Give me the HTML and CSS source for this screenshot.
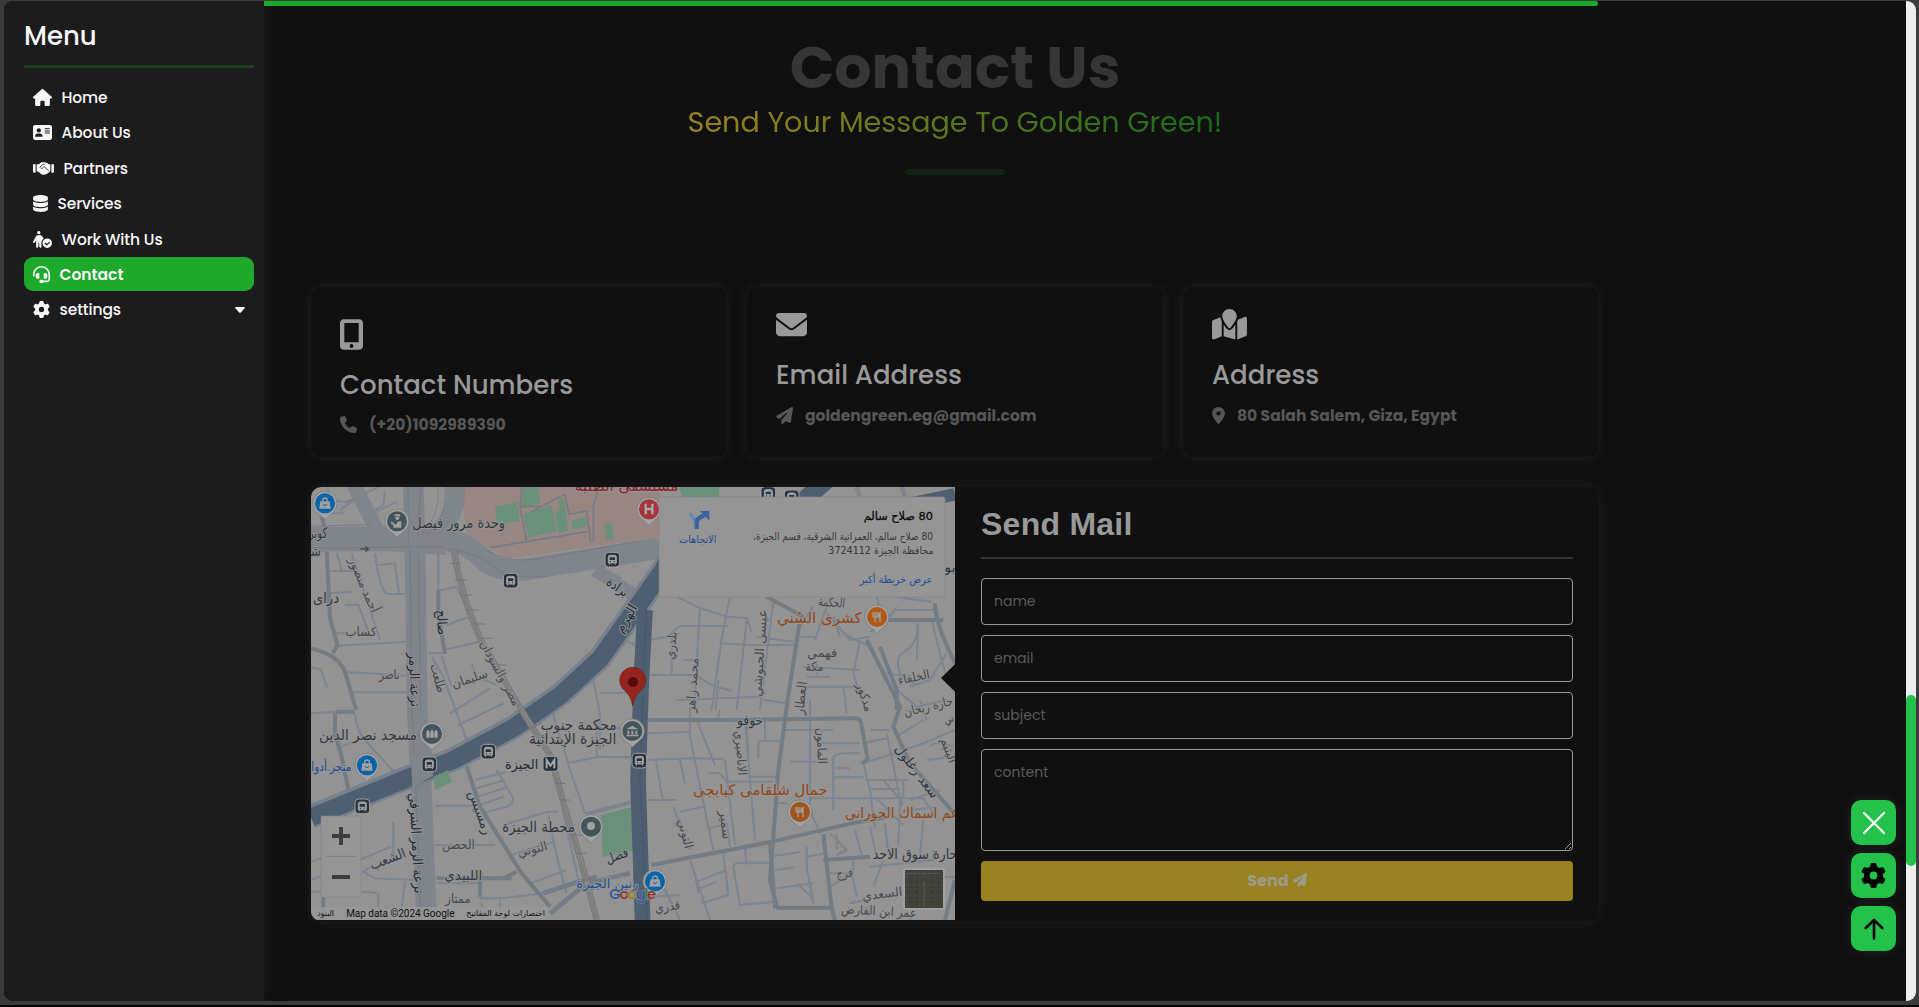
FILE: index.html
```html
<!DOCTYPE html>
<html lang="en">
<head>
<meta charset="utf-8">
<title>Golden Green - Contact</title>
<link rel="stylesheet" href="styles.css">
</head>
<body>
<svg class="defs" width="0" height="0" aria-hidden="true">
  <symbol id="i-home" viewBox="0 0 576 512"><path d="M575.8 255.5c0 18-15 32.1-32 32.1h-32l.7 160.2c0 2.7-.2 5.4-.5 8.1V472c0 22.1-17.9 40-40 40H392c-22.1 0-40-17.9-40-40V384c0-17.700-14.300-32-32-32H256c-17.700 0-32 14.300-32 32v88c0 22.100-17.900 40-40 40H104c-22.100 0-40-17.900-40-40V287.600H32c-18 0-32-14-32-32.100c0-9 3-17 10-24L266.400 8c7-7 15-8 22-8s15 2 21 7L564.800 231.500c8 7 12 15 11 24z"/></symbol>
  <symbol id="i-card" viewBox="0 0 576 512"><path fill-rule="evenodd" d="M64 32C28.700 32 0 60.700 0 96V416c0 35.300 28.700 64 64 64H512c35.300 0 64-28.700 64-64V96c0-35.300-28.700-64-64-64H64zM176 128a64 64 0 1 1 0 128 64 64 0 1 1 0-128zM144 288h64c44 0 80 36 80 80 0 9-7 16-16 16H80c-9 0-16-7-16-16 0-44 36-80 80-80zM368 128H496c20 0 20 32 0 32H368c-20 0-20-32 0-32zM368 192H496c20 0 20 32 0 32H368c-20 0-20-32 0-32zM368 256H496c20 0 20 32 0 32H368c-20 0-20-32 0-32z"/></symbol>
  <symbol id="i-hands" viewBox="0 0 640 512"><path d="M0 128h80v256H48c-26 0-48-20-48-48zM560 128h80v208c0 28-22 48-48 48h-32z"/><path d="M112 128h60l60-48c25-20 45-16 65-16h50c30 0 60 5 85 25l50 39h46v210h-24c8 20-10 50-38 46-8 28-32 40-56 32-20 28-50 38-76 22-40 20-70 4-90-14l-92-80h-40z"/><path d="M200 225l90-85c18-14 35-14 58-14M230 235c28 28 60 15 80-8l30-30 140 132" fill="none" stroke="#1c1c1c" stroke-width="24"/></symbol>
  <symbol id="i-data" viewBox="0 0 448 512"><path d="M448 80v48c0 44.200-100.300 80-224 80S0 172.200 0 128V80C0 35.800 100.300 0 224 0S448 35.800 448 80zM393.200 214.700c20.800-7.400 39.900-16.900 54.800-28.600V288c0 44.200-100.300 80-224 80S0 332.200 0 288V186.100c14.900 11.800 34 21.200 54.800 28.600C99.700 230.700 159.500 240 224 240s124.300-9.300 169.200-25.300zM0 346.100c14.900 11.800 34 21.200 54.800 28.600C99.700 390.700 159.500 400 224 400s124.300-9.300 169.200-25.300c20.800-7.400 39.900-16.900 54.800-28.600V432c0 44.200-100.300 80-224 80S0 476.200 0 432V346.100z"/></symbol>
  <symbol id="i-person" viewBox="0 0 576 512"><circle cx="176" cy="50" r="50"/><path d="M140 128h72c35 0 62 16 78 44l34 58c-45 28-68 74-68 124v116c0 56-40 56-68 0v-118h-24v118c-28 56-68 56-68 0V280l-38 64c-28 38-76 8-54-30l66-120c18-42 42-66 70-66z"/><path fill-rule="evenodd" d="M432 224a144 144 0 1 1 0 288 144 144 0 1 1 0-288zm67 100L416 386l-50-40-22 22 72 70 104-90z"/></symbol>
  <symbol id="i-headset" viewBox="0 0 512 512"><path d="M256 48C141.100 48 48 141.100 48 256v40c0 13.300-10.700 24-24 24s-24-10.700-24-24V256C0 114.600 114.600 0 256 0S512 114.600 512 256V400.100c0 48.600-39.400 88-88.100 88L313.600 488c-8.300 14.300-23.800 24-41.600 24H240c-26.500 0-48-21.500-48-48s21.500-48 48-48h32c17.800 0 33.300 9.700 41.600 24l110.400 .1c22.100 0 40-17.900 40-40V256c0-114.900-93.100-208-208-208zM144 208h16c17.700 0 32 14.300 32 32V352c0 17.700-14.300 32-32 32H144c-35.300 0-64-28.700-64-64V272c0-35.300 28.700-64 64-64zm224 0c35.300 0 64 28.700 64 64v48c0 35.300-28.700 64-64 64H352c-17.700 0-32-14.300-32-32V240c0-17.700 14.300-32 32-32h16z"/></symbol>
  <symbol id="i-gear" viewBox="0 0 512 512"><path d="M495.900 166.600c3.200 8.700 .5 18.400-6.400 24.600l-43.300 39.400c1.100 8.300 1.700 16.800 1.700 25.400s-.6 17.100-1.700 25.400l43.300 39.400c6.900 6.200 9.600 15.900 6.400 24.600c-4.400 11.900-9.700 23.300-15.800 34.300l-4.700 8.100c-6.600 11-14 21.400-22.100 31.200c-5.900 7.200-15.700 9.600-24.500 6.800l-55.700-17.700c-13.400 10.300-28.200 18.900-44 25.400l-12.500 57.100c-2 9.100-9 16.300-18.200 17.800c-13.800 2.300-28 3.500-42.500 3.500s-28.700-1.200-42.500-3.500c-9.200-1.500-16.200-8.700-18.200-17.800l-12.500-57.100c-15.800-6.500-30.600-15.100-44-25.400L83.100 425.900c-8.800 2.800-18.600 .3-24.500-6.800c-8.100-9.800-15.500-20.200-22.100-31.200l-4.700-8.100c-6.100-11-11.400-22.400-15.800-34.300c-3.200-8.700-.5-18.400 6.400-24.600l43.300-39.400C64.600 273.100 64 264.600 64 256s.6-17.100 1.700-25.400L22.400 191.200c-6.900-6.200-9.600-15.900-6.400-24.600c4.400-11.900 9.700-23.300 15.800-34.300l4.700-8.100c6.600-11 14-21.400 22.100-31.200c5.900-7.200 15.700-9.600 24.500-6.800l55.700 17.700c13.400-10.300 28.200-18.900 44-25.400l12.500-57.100c2-9.100 9-16.300 18.200-17.800C227.300 1.200 241.500 0 256 0s28.700 1.200 42.500 3.500c9.200 1.500 16.200 8.700 18.200 17.800l12.500 57.100c15.800 6.500 30.600 15.100 44 25.400l55.700-17.700c8.800-2.800 18.600-.3 24.500 6.800c8.100 9.800 15.500 20.200 22.100 31.200l4.700 8.100c6.100 11 11.400 22.400 15.800 34.300zM256 336a80 80 0 1 0 0-160 80 80 0 1 0 0 160z"/></symbol>
  <symbol id="i-mobile" viewBox="0 0 384 512"><path fill-rule="evenodd" d="M64 0H320c35.300 0 64 28.700 64 64V448c0 35.300-28.700 64-64 64H64c-35.300 0-64-28.700-64-64V64C0 28.700 28.700 0 64 0zM72 64V384H312V64zM192 416a32 32 0 1 0 0 64 32 32 0 1 0 0-64z"/></symbol>
  <symbol id="i-mail" viewBox="0 0 512 512"><path d="M48 64C21.500 64 0 85.500 0 112c0 15.100 7.100 29.300 19.200 38.400L236.800 313.600c11.400 8.500 27 8.500 38.400 0L492.800 150.400c12.100-9.100 19.200-23.300 19.200-38.400c0-26.500-21.500-48-48-48H48zM0 176V384c0 35.300 28.700 64 64 64H448c35.300 0 64-28.700 64-64V176L294.400 339.200c-22.800 17.100-54 17.100-76.800 0L0 176z"/></symbol>
  <symbol id="i-map" viewBox="0 0 576 512"><path d="M408 120c0 54.600-73.100 151.900-105.200 192c-7.700 9.600-22 9.600-29.600 0C241.100 271.900 168 174.600 168 120C168 53.700 221.700 0 288 0s120 53.700 120 120zM416 200.400c3.500-6.900 6.700-13.800 9.600-20.600c.5-1.200 1-2.500 1.500-3.700l116-46.400C558.900 123.400 576 135 576 152V422.800c0 9.800-6 18.600-15.100 22.300L416 503V200.400zM137.600 138.300c2.400 14.100 7.200 28.300 12.800 41.500c2.900 6.800 6.100 13.700 9.600 20.600V451.800L32.900 502.700C17.100 509 0 497.400 0 480.400V209.600c0-9.800 6-18.600 15.100-22.300l122.600-49zM327.800 332c13.900-17.400 35.700-45.700 56.200-77V504.300L192 449.400V255c20.500 31.300 42.300 59.600 56.200 77c20.500 25.600 59.100 25.600 79.600 0z"/></symbol>
  <symbol id="i-phone" viewBox="0 0 512 512"><path d="M164.900 24.600c-7.700-18.600-28-28.500-47.400-23.200l-88 24C12.100 30.200 0 46 0 64C0 311.400 200.600 512 448 512c18 0 33.800-12.100 38.600-29.500l24-88c5.300-19.400-4.600-39.700-23.200-47.400l-96-40c-16.300-6.800-35.200-2.100-46.300 11.600L304.700 368C234.300 334.700 177.300 277.700 144 207.300L193.300 167c13.700-11.200 18.400-30 11.600-46.300l-40-96z"/></symbol>
  <symbol id="i-plane" viewBox="0 0 512 512"><path d="M498.100 5.600c10.100 7 15.400 19.100 13.500 31.200l-64 416c-1.500 9.700-7.400 18.200-16 23s-18.900 5.400-28 1.600L284 427.700l-68.500 74.100c-8.900 9.700-22.900 12.900-35.200 8.100S160 493.200 160 480V396.400c0-4 1.500-7.800 4.200-10.700L331.800 202.800c5.800-6.300 5.600-16-.4-22s-15.700-6.400-22-.7L106 360.800 17.700 316.600C7.100 311.300 .3 300.700 0 288.900s5.900-22.800 16.100-28.700l448-256c10.700-6.100 23.900-5.500 34 1.400z"/></symbol>
  <symbol id="i-pin" viewBox="0 0 384 512"><path d="M215.700 499.200C267 435 384 279.400 384 192C384 86 298 0 192 0S0 86 0 192c0 87.400 117 243 168.300 307.200c12.300 15.300 35.100 15.300 47.400 0zM192 128a64 64 0 1 1 0 128 64 64 0 1 1 0-128z"/></symbol>
</svg>

<div class="window">
  <aside class="sidebar">
    <h2 class="menu-title">Menu</h2>
    <nav class="menu">
      <a class="item"><svg width="19" height="17"><use href="#i-home"/></svg><span>Home</span></a>
      <a class="item"><svg width="19" height="17"><use href="#i-card"/></svg><span>About Us</span></a>
      <a class="item"><svg width="21" height="17"><use href="#i-hands"/></svg><span>Partners</span></a>
      <a class="item"><svg width="15" height="17"><use href="#i-data"/></svg><span>Services</span></a>
      <a class="item"><svg width="19" height="17"><use href="#i-person"/></svg><span>Work With Us</span></a>
      <a class="item active"><svg width="17" height="17"><use href="#i-headset"/></svg><span>Contact</span></a>
      <a class="item"><svg width="17" height="17"><use href="#i-gear"/></svg><span>settings</span><svg class="caret" width="10" height="6" viewBox="0 0 10 6"><path d="M1 0h8q1.500 0 .6 1.200L5.800 5.500q-.8.800-1.600 0L.4 1.200Q-.5 0 1 0z"/></svg></a>
    </nav>
  </aside>

  <main class="content">
    <div class="progress"></div>
    <header class="heading">
      <h1>Contact Us</h1>
      <p>Send Your Message To Golden Green!</p>
      <div class="rule"></div>
    </header>

    <section class="cards">
      <article class="card tall">
        <svg width="23" height="31"><use href="#i-mobile"/></svg>
        <h3>Contact Numbers</h3>
        <p><svg width="17" height="17"><use href="#i-phone"/></svg><span>(+20)1092989390</span></p>
      </article>
      <article class="card">
        <svg width="31" height="31"><use href="#i-mail"/></svg>
        <h3>Email Address</h3>
        <p><svg width="17" height="17"><use href="#i-plane"/></svg><span>goldengreen.eg@gmail.com</span></p>
      </article>
      <article class="card">
        <svg width="35" height="31"><use href="#i-map"/></svg>
        <h3>Address</h3>
        <p><svg width="13" height="17"><use href="#i-pin"/></svg><span>80 Salah Salem, Giza, Egypt</span></p>
      </article>
    </section>

    <section class="panel">
      <svg class="map" width="644" height="433" viewBox="33 21 1932 1299">
        <defs>
          <g id="p"><path d="M0 48L-20 30A36 36 0 1 1 20 30z" fill="#a3a3a3" stroke="#777" stroke-width="2"/><circle r="30"/></g>
          <g id="bus"><rect x="-22" y="-22" width="44" height="44" rx="11" fill="#27333f" stroke="#a0a0a0" stroke-width="3"/><path d="M-12 10v-18q0-5 5-5h14q5 0 5 5v18zM-9 10v5M9 10v5" fill="#a0a0a0" stroke="#a0a0a0" stroke-width="3"/><path d="M-8-7H8V1H-8z" fill="#27333f"/><path d="M-7 6h3M4 6h3" stroke="#27333f" stroke-width="4"/></g>
          <g id="bag" fill="#a0a0a0"><path d="M-14-6h28l3 22h-34z"/><path d="M-7-5v-4q0-7 7-7t7 7v4" fill="none" stroke="#a0a0a0" stroke-width="4"/><path d="M-6 3q6 8 12 0" stroke="#0563a8" stroke-width="3" fill="none"/></g>
          <g id="food" stroke="#a0a0a0" stroke-width="4" fill="none"><path d="M-12-15v10q0 6 6 6t6-6v-10M-6-15v31"/><path d="M9 16V-13q-6 4-5 14h5z" fill="#a0a0a0"/></g>
        </defs>
        <rect x="33" y="21" width="1932" height="1299" fill="#939393"/>
        <path d="M480 21H1080V172L620 236 500 160z" fill="#988683"/>
        <g fill="#6b907a"><path d="M585 80l65-15 10 58-68 12zM665 21h50l5 50-53 14zM670 102l85-26 15 78-84 19zM763 96l15-3-2-35 17-3 12 95-28 10zM815 122l43-12 3 28-42 10zM912 140q0-8 10-9 10-2 13 6l7 30q0 12-12 12-10 0-12-8zM1138 21h118l5 60h-110zM903 1005l92-24 5 130-92 20z"/></g>
        <g fill="none" stroke="#767b86" stroke-width="5">
          <path d="M665 21l-5 60 20 100M692 96l103-53 12 60 53-10 12 95M880 185V80l15-55M570 203l290-48M660 80l60 0"/>
        </g>

        <g fill="none" stroke="#7c848f" stroke-width="6" stroke-linejoin="round">
          <path d="M85 21v40l55 5 95-45M120 90l70-50M190 110l60-35 5-40M230 95l60-30M60 100l70 0"/>
          <path d="M110 220l15 50M88 273h70M155 220l85 260M225 220q15 110 35 122h60M235 255l50-5 12 90M88 340l67-4M135 375h40l30 80M110 460h25M115 497l205-12M145 577l60 3 115 7M33 560l30 10 18 52M155 637h165"/>
          <path d="M415 212v120l55-12 40 90M440 435l70-25M430 510l110-25M385 520h50M395 530l35 60 70 190M425 530l30 90M515 550l15 40 60 25M450 700l120-75M475 735l135-65M500 780l-60-160"/>
          <path d="M33 700l75-5 58 0M120 800l70-25M165 700q5 55 30 80l95 105M33 870h70M33 1145l40-15M33 1235h150M280 1025v100M315 1205l-10 80M160 1235q70 0 75 8v50M215 1160l-25 15 35 20 120 5M33 1200l240-100"/>
          <path d="M525 900l95-25M530 925l85-25M535 950l85-28M540 975l70-25M590 870l50 85q0 18-20 25l-70 18M405 977h115M405 1095h180M410 1210h130M610 1035l125-38q35-5 40 0M745 1005l22 110 32 125M790 1000l45 200M690 1210l110-40M635 1125l130-40M540 1255h60l130-15M545 1270v50M600 1250v70M755 690l50 160 90-20 110 2M890 745v85M900 745h100M805 855l50 145 145-38M860 1005l135-35M880 600l20 100v110M900 638h100M975 480l30 15M905 265l60 30M1003 360l20-50"/>
        </g>
        <g fill="none" stroke="#7c848f" stroke-width="6" stroke-linejoin="round" transform="translate(990 0)">
          <path d="M140 350l60 30 90 30 60 5 15 40M300 350l-25 125-30 215M210 380l-15 260v50M55 480l60-10q25-30 40-32h140M125 460v125M55 585h140l50 30 60 18M140 660l250-10M160 540l40 0M270 490l90 5h140M350 420l-30 270M265 600l-8 90M380 470l110 15M430 360l-40 330M400 660l70 10M500 470l60 0M510 440l40-60M590 380l-35 100M520 560l170 10M690 480l-20 100 35 110M530 590h70M560 550v35M590 400l70 80 60-10M610 410l20 60M790 350l115 15M790 390h130M860 430q10 60-45 90-20 20-5 60 30 40 70 30M865 430l-5 110M905 420l40 160M800 380q-30 50-80 75M840 620l60-20 50-80M500 620l180 0M650 700l-10-80M770 580l60 10M790 620l70 60 90-20M640 460l80 40M740 350l20 70"/>
        </g>
        <g fill="none" stroke="#7c848f" stroke-width="6" stroke-linejoin="round" transform="translate(990 660)">
          <path d="M55 100l125-5M55 180l125-5 100 2M78 180l20 120M55 300h85M150 180l15 70M180 20v90l30 150 40 190M200 60l55 135M235 220h35l20 25h140M285 180l30 255M270 30l-10 35M350 80l5 100M405 60v60M385 130q0-8 15-8h60M385 130v45M355 230h85M345 60l30 360M150 335l70-15M240 385l50-15M130 320l50 130M290 370l10 70M430 310h40M460 90h150M540 0v330l30 70M480 185h80M575 130h115M610 180v150M610 180q0-20 30-20h50M620 205h40M610 232h90M540 295h340M700 190l90-30M695 130l75-15M720 90l60 0M705 240h130M720 267h90M700 190l20 80 15 115M770 100l45 220M800 110l80-50M820 150l60-20 95-40M870 0l20 60M900 140q10-20 70 0M890 180l85-10M740 295l80 80M760 240l60 70M810 295l-5 140M820 240l0 50M840 300l90-30M850 330l70-10M880 295l40 60M880 360l-10 110M600 400l50 50-30 15M620 400v50M675 390l20 75M720 380l20 90M765 370l10 90M430 468l80-12M435 510l60-8M440 565l110-15M500 550l45 40M530 440v60l20 110M530 470l55-10M310 500q0-10 20-12h90M310 500l20 115 110-10M345 445l5 50M200 545l90-35M280 460l15 125-80 25M180 480l60 180M210 565l50-20M100 560l50 100M60 590l90-5M195 520l10 60M590 520l60 0M600 560l70-40 0-45M615 550l50-30 15 70M720 500l190-20v-30M760 480l-30 80M660 610l150-30M870 560l-30 100M910 530l65 0"/>
        </g>
        <g fill="none" stroke="#737c83" stroke-width="12" stroke-linejoin="round">
          <path d="M80 215l10 200 22 80-14 25M33 505q90 20 105 80l30 105M65 110l10 35M105 700v60l20 70 20 100M108 695h55M415 330v70l20 122M500 860l40 120 75 120 50 80 85 100M410 1195h225M540 1200v50M540 1195h70l40-20M70 1250v70"/>
          <path d="M1045 720l230 0 390-5q15 0 18 12l20 110-18 15M1500 420l-40 260-25 190-25 330 20 80M1055 1155l360-70 240-55 110-20M1410 1085l15 200M1430 1283h165l-25-220M1595 1283l10 40M1570 1140l140-10M1400 350l110 60M1700 480l100 200-20 60 50 110 150 170M1750 420l180 0M1905 370q0 60 60 180M1740 500l50 130 0 60M1965 1200l-30 120"/>
        </g>
        <path d="M33 178L250 176 440 188" fill="none" stroke="#80848b" stroke-width="74"/>
        <path d="M160 10L235 160" stroke="#80848b" stroke-width="44"/>
        <path d="M468 10q5 110-75 165" fill="none" stroke="#80848b" stroke-width="56"/>
        <path d="M440 183q60 0 110 55 50 42 130 30L1080 204" fill="none" stroke="#80848b" stroke-width="64"/>
        <path d="M885 270l140 90" stroke="#80848b" stroke-width="40"/>
        <path d="M340 10l5 200 7 480 12 230 16 410" fill="none" stroke="#80848b" stroke-width="62"/>
        <path d="M325 21v180M362 21l-8 150M330 210l5 460 12 240 15 400M355 220l7 480M33 205l400-5M440 205q120 20 160 72 60 20 140 12M560 210q60 38 150 28l310-55M33 138l180-4M415 21q5 90-50 140M435 21q8 100-60 145" fill="none" stroke="#6f747f" stroke-width="2"/>
        <path d="M33 1010L335 888 460 838 640 742 780 645 900 535 1000 395 1090 270 1150 130" fill="none" stroke="#77818c" stroke-width="72" stroke-linejoin="round"/>
        <path d="M33 1012L335 890 460 840 640 744 780 647 900 537 1000 397 1090 270 1150 130M1490 80l90-80" fill="none" stroke="#4f5f72" stroke-width="54" stroke-linejoin="round"/>
        <path d="M1035 390L1024 600 1014 900 1028 1330" fill="none" stroke="#4f5f72" stroke-width="47"/>
        <path d="M1040 380L1030 600 1020 900 1040 1320" fill="none" stroke="#435366" stroke-width="2"/>
        <path d="M333 830l62-26 4 84-62 34z" fill="#80848b"/>
        <path d="M400 890l45-20 10 36-50 24z" fill="#6b907a"/>
        <path d="M1800 78l165-35" stroke="#4f5f72" stroke-width="38"/>
        <g stroke="#80848b" stroke-width="14" fill="none"><path d="M1670 21l10 30M1805 21l10 30"/></g>
        <path d="M730 1240l90-30 70-20M750 1300l110-90 130-30" stroke="#747c86" stroke-width="14" fill="none"/>
        <g fill="none">
          <path d="M462 210q15 120 80 270l110 190 100 160 45 165 45 145 48 180" stroke="#858585" stroke-width="18"/>
          <path d="M455 212q15 120 80 270l110 190 100 160 45 165 45 145 48 180M462 210q15 120 80 270l110 190 100 160 45 165 45 145 48 180M470 208q15 120 80 270l110 190 100 160 45 165 45 145 48 180" stroke="#707070" stroke-width="2"/>
          <path d="M452 250h30M465 300h36M480 345h36M500 390h36M520 432h36M540 475h36M575 555h44M690 745l36-16M740 830h30M765 910h30M780 960h30M815 1065h30M825 1120h35M850 1200h34" stroke="#747474" stroke-width="3"/>
        </g>

        <g class="lbl">
          <text x="476" y="143" textLength="278" lengthAdjust="spacingAndGlyphs">وحدة مرور فيصل</text>
          <text x="42" y="173" textLength="80" lengthAdjust="spacingAndGlyphs">كوبرى</text>
          <text x="43" y="227" textLength="40" lengthAdjust="spacingAndGlyphs">شـ</text>
          <text x="78" y="370" textLength="78" lengthAdjust="spacingAndGlyphs">دراى</text>
          <text class="sm" x="183" y="469" textLength="94" lengthAdjust="spacingAndGlyphs">كساب</text>
          <text class="sm" x="268" y="596" textLength="62" lengthAdjust="spacingAndGlyphs">ناصر</text>
          <text class="sm" transform="translate(180 320) rotate(67)" textLength="175" lengthAdjust="spacingAndGlyphs">أحمد منصور</text>
          <text class="dk" transform="translate(412 428) rotate(88)" textLength="76" lengthAdjust="spacingAndGlyphs">صالح</text>
          <text class="dk" transform="translate(330 600) rotate(88)" textLength="162" lengthAdjust="spacingAndGlyphs">ترعة الزمر</text>
          <text class="sm" transform="translate(402 598) rotate(75)" textLength="88" lengthAdjust="spacingAndGlyphs">طلعت</text>
          <text class="sm" transform="translate(513 608) rotate(-18)" textLength="112" lengthAdjust="spacingAndGlyphs">سليمان</text>
          <text class="sm" transform="translate(590 585) rotate(62)" textLength="215" lengthAdjust="spacingAndGlyphs">مصر والسودان</text>
          <text class="dk" transform="translate(945 332) rotate(35)" textLength="70" lengthAdjust="spacingAndGlyphs">برادة</text>
          <text class="dk" transform="translate(990 422) rotate(-60)" textLength="92" lengthAdjust="spacingAndGlyphs">الهرم</text>
          <text x="204" y="780" textLength="294" lengthAdjust="spacingAndGlyphs">مسجد نصر الدين</text>
          <text class="blue" x="94" y="874" textLength="120" lengthAdjust="spacingAndGlyphs">متجر أدوا</text>
          <text x="836" y="750" textLength="228" lengthAdjust="spacingAndGlyphs">محكمة جنوب</text>
          <text x="818" y="792" textLength="262" lengthAdjust="spacingAndGlyphs">الجيزة الإبتدائية</text>
          <text class="dk" x="665" y="866" textLength="100" lengthAdjust="spacingAndGlyphs">الجيزة</text>
          <text x="716" y="1055" textLength="218" lengthAdjust="spacingAndGlyphs">محطة الجيزة</text>
          <text class="sm" x="475" y="1108" textLength="98" lengthAdjust="spacingAndGlyphs">الحصن</text>
          <text class="dk2" x="490" y="1200" textLength="114" lengthAdjust="spacingAndGlyphs">اللبيدي</text>
          <text class="sm" x="474" y="1270" textLength="76" lengthAdjust="spacingAndGlyphs">ممتاز</text>
          <text class="sm" transform="translate(700 1120) rotate(-14)" textLength="90" lengthAdjust="spacingAndGlyphs">التوني</text>
          <text class="dk2" transform="translate(268 1150) rotate(-21)" textLength="112" lengthAdjust="spacingAndGlyphs">الشعب</text>
          <text class="dk2" transform="translate(528 1002) rotate(70)" textLength="138" lengthAdjust="spacingAndGlyphs">رمسيس</text>
          <text class="dk" transform="translate(336 1090) rotate(87)" textLength="302" lengthAdjust="spacingAndGlyphs">ترعة الزمر الشرقي</text>
          <text class="dk2" transform="translate(955 1140) rotate(-20)" textLength="70" lengthAdjust="spacingAndGlyphs">فضل</text>
          <text class="blue" x="922" y="1225" textLength="186" lengthAdjust="spacingAndGlyphs">رنين الجيزة</text>
          <text class="dk2" x="1350" y="734" textLength="78" lengthAdjust="spacingAndGlyphs">خوفو</text>
          <text class="org" x="1558" y="430" textLength="254" lengthAdjust="spacingAndGlyphs">كشرى السُني</text>
          <text class="sm" transform="translate(1594 380) rotate(5)" textLength="80" lengthAdjust="spacingAndGlyphs">الحكمة</text>
          <text class="sm" x="1566" y="531" textLength="90" lengthAdjust="spacingAndGlyphs">فهمي</text>
          <text class="sm" x="1543" y="572" textLength="54" lengthAdjust="spacingAndGlyphs">مكة</text>
          <text class="sm" transform="translate(1126 498) rotate(-84)" textLength="85" lengthAdjust="spacingAndGlyphs">بلدري</text>
          <text class="sm" transform="translate(1190 616) rotate(-86)" textLength="165" lengthAdjust="spacingAndGlyphs">محمد زاهر</text>
          <text class="sm" transform="translate(1392 520) rotate(-86)" textLength="262" lengthAdjust="spacingAndGlyphs">عيسى الجيوشي</text>
          <text class="sm" transform="translate(1515 655) rotate(-84)" textLength="100" lengthAdjust="spacingAndGlyphs">العطار</text>
          <text class="sm" transform="translate(1683 655) rotate(72)" textLength="88" lengthAdjust="spacingAndGlyphs">مدكور</text>
          <text class="sm" transform="translate(1844 604) rotate(-12)" textLength="96" lengthAdjust="spacingAndGlyphs">الخلفاء</text>
          <text class="sm" transform="translate(1888 692) rotate(-14)" textLength="150" lengthAdjust="spacingAndGlyphs">حارة ريحان</text>
          <text class="sm" transform="translate(1950 728) rotate(-20)" textLength="30" lengthAdjust="spacingAndGlyphs">ني</text>
          <text class="sm" transform="translate(1935 815) rotate(70)" textLength="78" lengthAdjust="spacingAndGlyphs">اليتيم</text>
          <text class="dk2" transform="translate(1840 882) rotate(53)" textLength="190" lengthAdjust="spacingAndGlyphs">سعد زغلول</text>
          <text class="sm" transform="translate(1310 820) rotate(86)" textLength="135" lengthAdjust="spacingAndGlyphs">الاناصيري</text>
          <text class="sm" transform="translate(1552 798) rotate(88)" textLength="108" lengthAdjust="spacingAndGlyphs">المامون</text>
          <text class="org" x="1381" y="945" textLength="404" lengthAdjust="spacingAndGlyphs">جمال شلقامى كبابجى</text>
          <text class="org" x="1806" y="1014" textLength="342" lengthAdjust="spacingAndGlyphs">عم اسماك الحورانى</text>
          <text class="sm" transform="translate(1264 1036) rotate(84)" textLength="86" lengthAdjust="spacingAndGlyphs">سمير</text>
          <text class="sm" transform="translate(1144 1064) rotate(76)" textLength="90" lengthAdjust="spacingAndGlyphs">التوني</text>
          <text x="1845" y="1136" textLength="254" lengthAdjust="spacingAndGlyphs">حارة سوق الاحد</text>
          <text class="sm" transform="translate(1635 1192) rotate(-5)" textLength="50" lengthAdjust="spacingAndGlyphs">فرج</text>
          <text class="sm" transform="translate(1748 1254) rotate(-7)" textLength="120" lengthAdjust="spacingAndGlyphs">السعدي</text>
          <text class="sm" transform="translate(1736 1306) rotate(3)" textLength="226" lengthAdjust="spacingAndGlyphs">عمر ابن الفارض</text>
          <text class="sm" transform="translate(1104 1292) rotate(-8)" textLength="76" lengthAdjust="spacingAndGlyphs">قدري</text>
          <text class="red" x="980" y="34" textLength="310" lengthAdjust="spacingAndGlyphs">مستشفى الطلبة</text>
          <text class="dk2" x="1950" y="275" textLength="34" lengthAdjust="spacingAndGlyphs">بو</text>
        </g>

        <use href="#p" x="75" y="70" fill="#0563a8"/><use href="#bag" x="75" y="70"/>
        <use href="#p" x="201" y="856" fill="#0563a8"/><use href="#bag" x="201" y="856"/>
        <use href="#p" x="1065" y="1204" fill="#0563a8"/><use href="#bag" x="1065" y="1204"/>
        <use href="#p" x="291" y="124" fill="#44545b"/><path d="M284 103h16v6h-16zM286 111h12q0 9-6 9t-6-9zM275 124l12 11 8-11h9v19h-24v-8l-8-6z" fill="#a0a0a0"/>
        <use href="#p" x="396" y="762" fill="#44545b"/><path d="M379 773v-18l5-6 5 6v18zM391 773v-18q5-12 10 0v18zM403 773v-18l5-6 5 6v18z" fill="#a0a0a0"/>
        <use href="#p" x="997" y="753" fill="#44545b"/><path d="M979 748l18-11 18 11zM982 752h6v11h-6zM1006 752h6v11h-6zM979 764h36v5h-36zM994 752h6v11h-6z" fill="#a0a0a0"/>
        <use href="#p" x="873" y="1040" fill="#44545b"/><circle cx="873" cy="1038" r="12" fill="#a0a0a0"/>
        <use href="#p" x="1047" y="88" fill="#a7343c"/><path d="M1037 71v32M1057 71v32M1037 87h20" stroke="#aaa" stroke-width="7"/>
        <use href="#p" x="1731" y="411" fill="#b05a18"/><use href="#food" x="1731" y="411"/>
        <use href="#p" x="1500" y="996" fill="#a3521a"/><use href="#food" x="1500" y="996"/>
        <use href="#bus" x="632" y="302"/><use href="#bus" x="937" y="239"/><use href="#bus" x="388" y="853"/><use href="#bus" x="565" y="815"/><use href="#bus" x="187" y="979"/><use href="#bus" x="1018" y="842"/><use href="#bus" x="1405" y="42"/><use href="#bus" x="1475" y="52"/>
        <rect x="729" y="829" width="45" height="45" rx="9" fill="#27333f" stroke="#a0a0a0" stroke-width="3"/><path d="M740 865v-25l11.500 17 11.500-17v25" fill="none" stroke="#a8a8a8" stroke-width="6"/>
        <path d="M181 207h25M196 199l9 8-9 8" fill="none" stroke="#4b5056" stroke-width="4"/>
        <path d="M998 678q-4-28-22-45a39 39 0 1 1 46-1q-20 18-24 46z" fill="#94261f" stroke="#701b16" stroke-width="2"/><circle cx="999" cy="606" r="15" fill="#570a0a"/>

        <rect x="1077" y="51" width="858" height="300" rx="6" fill="#959595" stroke="#858585" stroke-width="2"/>
        <path d="M1192 132L1170 99" stroke="#6f87a8" stroke-width="11"/><path d="M1190 147v-20q0-8 7-12l18-12" fill="none" stroke="#3d64a0" stroke-width="13"/><path d="M1200 93h28v29z" fill="#3d64a0"/>
        <g class="info">
          <text class="ttl" x="1795" y="119" textLength="207" lengthAdjust="spacingAndGlyphs">80 صلاح سالم</text>
          <text x="1629" y="181" textLength="540" lengthAdjust="spacingAndGlyphs">80 صلاح سالم، العمرانية الشرقية، قسم الجيزة،</text>
          <text x="1743" y="222" textLength="316" lengthAdjust="spacingAndGlyphs">محافظة الجيزة 3724112</text>
          <text class="lnk" x="1193" y="189" textLength="112" lengthAdjust="spacingAndGlyphs">الاتجاهات</text>
          <text class="lnk" x="1788" y="308" textLength="218" lengthAdjust="spacingAndGlyphs">عرض خريطة أكبر</text>
        </g>
        <rect x="63" y="1008" width="120" height="243" rx="4" fill="#959595" stroke="#858585" stroke-width="2"/>
        <path d="M78 1129h90" stroke="#808080" stroke-width="3"/><path d="M96 1068h54M123 1041v54M96 1191h54" stroke="#3d3d3d" stroke-width="12"/>
        <rect x="33" y="1281" width="710" height="39" fill="#979797" opacity=".85"/>
        <g class="foot"><text x="77" y="1308" textLength="50" lengthAdjust="spacingAndGlyphs">البنود</text><text class="en" x="301" y="1310" textLength="325">Map data ©2024 Google</text><text x="617" y="1308" textLength="236" lengthAdjust="spacingAndGlyphs">اختصارات لوحة المفاتيح</text></g>
        <text class="google" x="998" y="1256" textLength="140"><tspan fill="#2b5699">G</tspan><tspan fill="#952e27">o</tspan><tspan fill="#a07c10">o</tspan><tspan fill="#2b5699">g</tspan><tspan fill="#297b3d">l</tspan><tspan fill="#952e27">e</tspan></text>
        <rect x="1812" y="1167" width="120" height="120" rx="4" fill="#42423c" stroke="#a0a0a0" stroke-width="6"/>
        <g stroke-width="3" fill="none"><path d="M1818 1190h108M1818 1215h108M1818 1248h108M1818 1272h108" stroke="#505047" stroke-dasharray="9 5 3 7"/><path d="M1830 1170v114M1850 1170v114M1895 1170v114M1915 1170v114" stroke="#353632" stroke-dasharray="12 6 5 8"/><path d="M1873 1205v80M1820 1180h100" stroke="#5c5c52" stroke-dasharray="17 4"/></g>
        <path d="M1966 552v84l-43-42z" fill="#101010"/>
      </svg>
      <form class="mail">
        <h2>Send Mail</h2>
        <input type="text" placeholder="name">
        <input type="text" placeholder="email">
        <input type="text" placeholder="subject">
        <textarea placeholder="content"></textarea>
        <button type="button">Send<svg width="14" height="14"><use href="#i-plane"/></svg></button>
      </form>
    </section>

    <div class="fabs">
      <div class="fab"><svg width="24" height="24" viewBox="0 0 24 24"><path d="M2 2l20 20M22 2L2 22" stroke="#fff" stroke-width="2.200" stroke-linecap="round"/></svg></div>
      <div class="fab"><svg width="25" height="25"><use href="#i-gear"/></svg></div>
      <div class="fab"><svg width="20" height="22" viewBox="0 0 20 22"><path d="M10 20.500V2M1.800 10L10 1.800 18.200 10" fill="none" stroke="#000" stroke-width="2.600" stroke-linecap="round" stroke-linejoin="round"/></svg></div>
    </div>
  </main>
  <div class="scroll"><div class="thumb"></div></div>
</div>
</body>
</html>
```
FILE: styles.css
```css
* { box-sizing: border-box; }
body {
  margin: 0;
  padding: 1px 3px 0 4px;
  height: 1007px;
  overflow: hidden;
  background: linear-gradient(#3b3b3b 0 1005px, #000 1005px);
  font-family: Poppins, Inter, "Liberation Sans", sans-serif;
}
h1, h2, h3, p { margin: 0; }
svg { fill: currentColor; flex: none; }
.defs { position: absolute; }
.window {
  display: flex;
  height: 1000px;
  border-radius: 9px;
  overflow: hidden;
  background: #101010;
}

/* Sidebar */
.sidebar {
  width: 260px;
  flex: none;
  padding: 14px 10px 0 20px;
  background: #1c1c1c;
  color: #f7f7f7;
  box-shadow: 0 0 14px #1c1c1c;
}
.menu-title {
  height: 53px;
  border-bottom: 3px solid #1d3f22;
  font-size: 26px;
  line-height: 43px;
  font-weight: 500;
}
.menu { display: flex; flex-direction: column; gap: 1.450px; padding-top: 12.300px; }
.item {
  display: flex;
  align-items: center;
  gap: 9.500px;
  height: 34px;
  padding: 0 9px;
  border-radius: 9px;
  font-size: 15.500px;
  font-weight: 500;
  letter-spacing: -.1px;
}
.item .caret { margin-left: auto; }
.active { background: #1da92c; font-weight: 600; letter-spacing: 0; }

/* Content */
.content { flex: 1; min-width: 0; }
.progress { width: 1334px; height: 5px; background: #1da92c; border-radius: 0 3px 3px 0; }
.heading {
  width: 1382px;
  height: 281px;
  padding-top: 22px;
  display: flex;
  flex-direction: column;
  align-items: center;
}
.heading h1 { font-size: 58.600px; line-height: 80px; font-weight: 700; color: #363636; white-space: nowrap; }
.heading p {
  margin-top: -4px;
  font-size: 28.600px;
  line-height: 36px;
  white-space: nowrap;
  color: transparent;
  background: linear-gradient(90deg, #998222, #1a6a1c);
  background-clip: text;
  -webkit-background-clip: text;
}
.rule { width: 100px; height: 6px; margin-top: 29px; border-radius: 3px; background: #112313; }

.cards { display: grid; grid-template-columns: repeat(3, 416px); gap: 20px; margin-left: 47px; }
.card {
  display: flex;
  flex-direction: column;
  height: 170px;
  padding: 22px 30px 0 29px;
  border-radius: 10px;
  box-shadow: 0 0 10px #202020;
  color: #999;
}
.card.tall { padding-top: 32px; }
.card h3 { margin-top: 18px; font-size: 26px; line-height: 35px; font-weight: 500; white-space: nowrap; }
.card p { display: flex; align-items: center; gap: 12px; margin-top: 12px; height: 20px; color: #565656; font-size: 15.600px; font-weight: 700; white-space: nowrap; }
.card.tall p { margin-top: 11px; }

.panel { display: flex; width: 1288px; height: 434px; margin: 30px 0 0 47px; border-radius: 10px; overflow: hidden; box-shadow: 0 0 12px #202020; }
.map { display: block; }
.map text { text-anchor: middle; font-family: "DejaVu Sans", sans-serif; }
.lbl text { font-size: 44px; fill: #30383f; stroke: #949494; stroke-width: 6px; paint-order: stroke; stroke-linejoin: round; }
.lbl .sm { font-size: 38px; fill: #474a50; }
.lbl .dk { fill: #222c3a; font-size: 41px; }
.lbl .dk2 { fill: #2e3a45; font-size: 41px; }
.lbl .blue { fill: #1c4f92; font-size: 38px; }
.lbl .org { fill: #924616; }
.lbl .red { fill: #8b2027; }
.info text { font-size: 31px; fill: #383838; direction: rtl; }
.map .info .ttl { font-size: 34px; fill: #080808; stroke: #080808; stroke-width: .8px; }
.map .info .lnk { fill: #1d4c94; }
.foot text { font-size: 24px; fill: #111; }
.map .foot .en { font-family: Roboto, sans-serif; font-size: 30px; }
.map .google { font-family: Poppins, "Open Sans", sans-serif; font-size: 44px; font-weight: 500; stroke: #999; stroke-width: 3px; paint-order: stroke; }

.mail { flex: 1; display: flex; flex-direction: column; gap: 10px; padding: 19px 26px 0; }
.mail h2 {
  height: 53px;
  margin-bottom: 9px;
  border-bottom: 2px solid #333;
  color: #999;
  font: bold 32px/36px "Liberation Sans", Arial, sans-serif;
  letter-spacing: .25px;
}
.mail input, .mail textarea {
  display: block;
  width: 100%;
  height: 47px;
  padding: 0 12px;
  border: 1px solid #999;
  border-radius: 4px;
  background: transparent;
  font: 400 14px/20px Poppins, Inter, sans-serif;
}
.mail textarea { height: 102px; padding-top: 12px; }
.mail ::placeholder { color: #5a5a5a; opacity: 1; }
.mail button {
  display: flex;
  justify-content: center;
  align-items: center;
  gap: 4px;
  height: 40px;
  padding: 0 0 2px;
  border: 0;
  border-radius: 4px;
  background: #998222;
  color: #9f9a8b;
  font: 700 16px Poppins, Inter, sans-serif;
}

/* Floating buttons over the page */
.fabs { position: absolute; left: 1851px; top: 800px; display: flex; flex-direction: column; gap: 8px; }
.fab {
  width: 45px;
  height: 45px;
  display: flex;
  align-items: center;
  justify-content: center;
  border-radius: 10px;
  background: #24c24b;
  color: #000;
  box-shadow: 0 0 10px #242424;
}
.scroll { width: 10px; background: #eee; padding-top: 694px; }
.thumb { height: 171px; border-radius: 5px; background: #24c24b; }
```
